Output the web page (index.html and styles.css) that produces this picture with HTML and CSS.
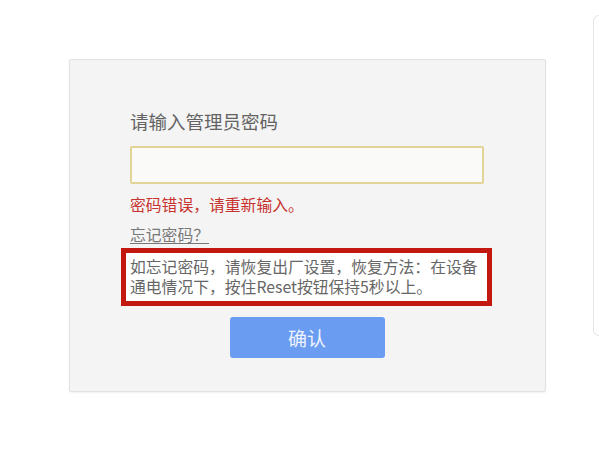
FILE: index.html
```html
<!DOCTYPE html>
<html lang="zh-CN">
<head>
<meta charset="utf-8">
<title>请输入管理员密码</title>
<link rel="stylesheet" href="styles.css">
</head>
<body>
<div class="page">
  <div class="card">
    <div class="title">请输入管理员密码</div>
    <input class="pwd" type="password">
    <div class="error">密码错误，请重新输入。</div>
    <a class="forgot" href="#">忘记密码？</a>
    <div class="hint">如忘记密码，请恢复出厂设置，恢复方法：在设备通电情况下，按住Reset按钮保持5秒以上。</div>
    <div class="actions"><button class="confirm">确认</button></div>
  </div>
</div>
<div class="edge-handle"></div>
</body>
</html>
```
FILE: styles.css
```css
html, body {
  margin: 0;
  padding: 0;
  background: #ffffff;
}
body {
  font-family: "Noto Sans CJK SC", "Noto Sans", sans-serif;
  width: 599px;
  height: 449px;
  overflow: hidden;
  position: relative;
}
.page {
  padding: 59px 0 0 69px;
}
.card {
  box-sizing: border-box;
  width: 477px;
  background: #f4f4f4;
  border: 1px solid #e1e1e1;
  border-radius: 2px;
  box-shadow: 0 1px 2px rgba(0,0,0,0.06);
  padding: 49px 61px 33px 60px;
  display: flex;
  flex-direction: column;
  align-items: flex-start;
}
.title {
  font-size: 18.5px;
  line-height: 24px;
  color: #636363;
}
.pwd {
  box-sizing: border-box;
  margin: 13px 0 0;
  width: 354px;
  height: 38px;
  border: 2px solid #e2d497;
  border-radius: 2px;
  background: #fafaf8;
  outline: none;
  padding: 0 8px;
}
.error {
  margin-top: 11px;
  font-size: 15.8px;
  line-height: 20px;
  color: #c8322e;
}
.forgot {
  margin-top: 10px;
  font-size: 15.8px;
  line-height: 20px;
  color: #777777;
  text-decoration: underline;
  text-underline-offset: 2px;
}
.hint {
  box-sizing: border-box;
  margin: 3px -8px 0 -9px;
  width: 371px;
  border: 5px solid #c2180f;
  background: #ffffff;
  padding: 4px 0 4px 4px;
  font-size: 15.8px;
  line-height: 20px;
  color: #666666;
}
.actions {
  align-self: stretch;
  display: flex;
  justify-content: center;
  margin-top: 11px;
}
.confirm {
  width: 155px;
  height: 41px;
  border: none;
  border-radius: 3px;
  background: #6a9cf1;
  color: #eef3fc;
  font-family: "Noto Sans CJK SC", "Noto Sans", sans-serif;
  font-size: 19px;
  padding: 0;
}
.edge-handle {
  position: absolute;
  left: 593px;
  top: 15px;
  width: 12px;
  height: 319px;
  border: 1px solid #e4e4e4;
  border-radius: 6px;
}
```
